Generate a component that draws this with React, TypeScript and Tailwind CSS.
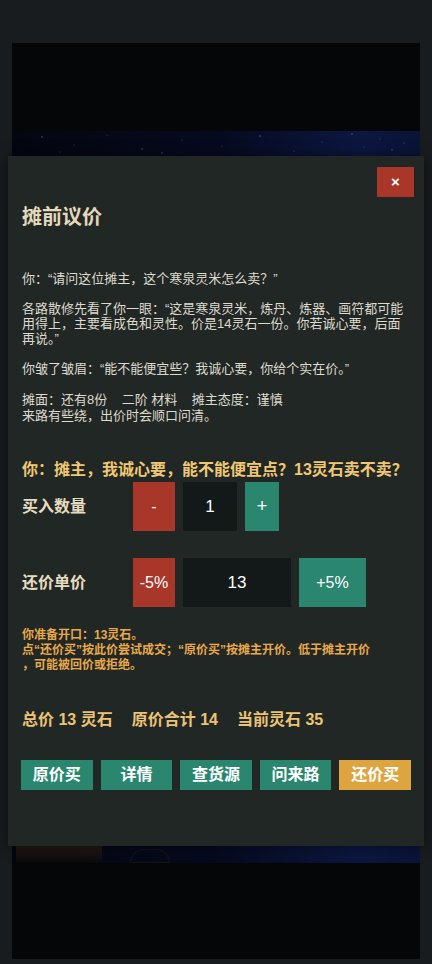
import React from "react";

const actions = [
  { label: "原价买", tone: "green" },
  { label: "详情", tone: "green" },
  { label: "查货源", tone: "green" },
  { label: "问来路", tone: "green" },
  { label: "还价买", tone: "gold" },
];

function Stars() {
  const dots = [
    [30, 6], [62, 14], [95, 4], [130, 18], [170, 9], [210, 15], [248, 5], [282, 20],
    [310, 11], [340, 3], [352, 16], [368, 8], [380, 19], [392, 12], [48, 21], [150, 22],
  ];
  return (
    <svg className="absolute inset-x-0 top-0 h-[25px] w-full" viewBox="0 0 408 25" preserveAspectRatio="none">
      {dots.map(([x, y], i) => (
        <circle key={i} cx={x} cy={y} r={i % 3 === 0 ? 0.8 : 0.5} fill="#9aa6c8" opacity={0.5} />
      ))}
    </svg>
  );
}

export default function App() {
  return (
    <div className="relative h-[964px] w-[432px] overflow-hidden bg-[#181c1f] px-[12px] pt-[43px] font-['Liberation_Sans','Noto_Sans_CJK_SC',sans-serif]">
      {/* backdrop scene */}
      <div className="flex h-[916px] flex-col bg-[#050607]">
        <div className="h-[88px]" />
        <div className="relative h-[732px] bg-[linear-gradient(90deg,#04060f_0%,#060a1f_50%,#0c1740_85%,#0a1338_100%)]">
          <Stars />
          <div className="absolute bottom-0 left-[4px] h-[17px] w-[86px] bg-[linear-gradient(180deg,#2e2214,#0b0907)] opacity-70" />
          <div className="absolute bottom-0 left-[118px] h-[14px] w-[40px] rounded-t-full border border-[#2a2418] opacity-40" />
        </div>
      </div>

      {/* dialog */}
      <div className="absolute left-[8px] top-[156px] h-[690px] w-[416px] bg-[#212725] pl-[14px] pr-[13px] pt-[11px] shadow-[0_0_12px_rgba(0,0,0,0.5)]">
        <div className="flex justify-end">
          <button className="mr-[-3px] flex h-[30px] w-[37px] items-center justify-center bg-[#a8372a] text-[15px] font-bold text-white">
            ×
          </button>
        </div>

        <h2 className="mt-[6px] text-[20px] font-bold leading-[28px] text-[#e4d9bb]">摊前议价</h2>

        <div className="mt-[40px] text-[13px] leading-[15px] text-[#dedacd]">
          <p>你：“请问这位摊主，这个寒泉灵米怎么卖？”</p>
          <p className="mt-[15px]">
            各路散修先看了你一眼：“这是寒泉灵米，炼丹、炼器、画符都可能用得上，主要看成色和灵性。价是14灵石一份。你若诚心要，后面再说。”
          </p>
          <p className="mt-[15px]">你皱了皱眉：“能不能便宜些？我诚心要，你给个实在价。”</p>
          <p className="mt-[16px]">
            摊面：还有8份&nbsp;&nbsp;&nbsp;&nbsp;二阶 材料&nbsp;&nbsp;&nbsp;&nbsp;摊主态度：谨慎
          </p>
          <p className="mt-[1px]">来路有些绕，出价时会顺口问清。</p>
        </div>

        <p className="mt-[35px] text-[16px] font-bold leading-[24px] text-[#f0c874]">
          你：摊主，我诚心要，能不能便宜点？13灵石卖不卖？
        </p>

        <div className="flex h-[49px] items-center">
          <span className="w-[111px] text-[16px] font-bold text-[#e6dcc2]">买入数量</span>
          <div className="flex h-full gap-[8px]">
            <button className="w-[42px] bg-[#a8372a] text-[16px] text-white">-</button>
            <div className="flex w-[54px] items-center justify-center bg-[#131819] text-[17px] text-white">1</div>
            <button className="w-[34px] bg-[#2b8670] text-[18px] text-white">+</button>
          </div>
        </div>

        <div className="mt-[27px] flex h-[49px] items-center">
          <span className="w-[111px] text-[16px] font-bold text-[#e6dcc2]">还价单价</span>
          <div className="flex h-full gap-[8px]">
            <button className="w-[42px] bg-[#a8372a] text-[16px] text-white">-5%</button>
            <div className="flex w-[108px] items-center justify-center bg-[#131819] text-[17px] text-white">13</div>
            <button className="w-[67px] bg-[#2b8670] text-[16px] text-white">+5%</button>
          </div>
        </div>

        <div className="mt-[21px] text-[12px] font-bold leading-[15px] text-[#e8a94c]">
          <p>你准备开口：13灵石。</p>
          <p>点“还价买”按此价尝试成交；“原价买”按摊主开价。低于摊主开价</p>
          <p>，可能被回价或拒绝。</p>
        </div>

        <div className="mt-[35px] flex gap-[19px] text-[16px] font-bold leading-[24px] text-[#ebc374]">
          <span>总价 13 灵石</span>
          <span>原价合计 14</span>
          <span>当前灵石 35</span>
        </div>

        <div className="ml-[-1px] mt-[28px] flex gap-[8px]">
          {actions.map((a) => (
            <button
              key={a.label}
              className={
                a.tone === "gold"
                  ? "h-[30px] flex-1 bg-[#dca540] text-[16px] font-bold text-white"
                  : "h-[30px] flex-1 bg-[#2b8670] text-[16px] font-bold text-white"
              }
            >
              {a.label}
            </button>
          ))}
        </div>
      </div>
    </div>
  );
}
